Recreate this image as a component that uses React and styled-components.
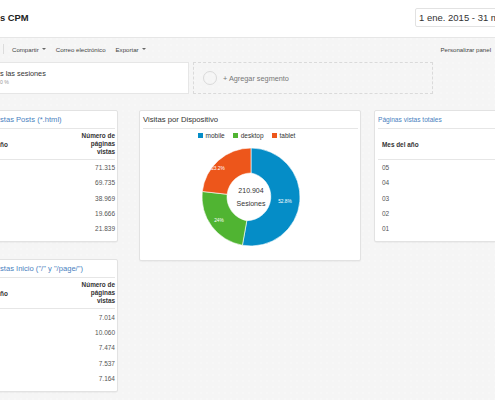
import React from "react";
import styled, { createGlobalStyle } from "styled-components";

const GlobalStyle = createGlobalStyle`
  html, body {
    margin: 0;
    padding: 0;
    background: #f5f5f5;
  }
  body {
    font-family: "Liberation Sans", Arial, sans-serif;
  }
`;

const Page = styled.div`
  width: 495px;
  height: 400px;
  overflow: hidden;
  background-color: #f5f5f5;
  background-image: radial-gradient(rgba(255, 255, 255, 0.8) 0.5px, transparent 0.8px);
  background-size: 6px 6px;
`;

const Header = styled.div`
  height: 38px;
  box-sizing: border-box;
  padding-bottom: 2px;
  background: #fff;
  border-bottom: 1px solid #e6e6e6;
  display: grid;
  grid-template-columns: 415px 1fr;
  align-items: center;
`;

const Title = styled.div`
  font-size: 9.4px;
  font-weight: bold;
  color: #222;
`;

const DateRange = styled.div`
  justify-self: start;
  white-space: nowrap;
  font-size: 9.5px;
  color: #333;
  padding: 3px 3px;
  background: #fff;
  border: 1px solid #e2e2e2;
  border-radius: 2px;
`;

const Toolbar = styled.div`
  height: 24px;
  box-sizing: border-box;
  padding: 0 4px 2px 3px;
  display: flex;
  align-items: center;
  gap: 10px;
  font-size: 6.1px;
  color: #444;
`;

const Sep = styled.span`
  width: 1px;
  height: 10px;
  background: #dcdcdc;
  margin-right: -2px;
`;

const ToolItem = styled.span`
  display: inline-flex;
  align-items: center;
  white-space: nowrap;
  margin-left: ${(p) => p.$ml || "0px"};
`;

const Caret = styled.span`
  margin-left: 3px;
  width: 0;
  height: 0;
  border-left: 2px solid transparent;
  border-right: 2px solid transparent;
  border-top: 2px solid #666;
`;

const Segments = styled.div`
  height: 32px;
  display: flex;
  gap: 4px;
`;

const SegmentBox = styled.div`
  margin-left: -2px;
  width: 191px;
  box-sizing: border-box;
  background: #fff;
  border: 1px solid #e6e6e6;
  padding-left: 1px;
  display: flex;
  flex-direction: column;
  justify-content: center;
  line-height: 9px;
`;

const SegName = styled.div`
  font-size: 7.3px;
  color: #333;
  white-space: nowrap;
`;

const SegPct = styled.div`
  font-size: 5.2px;
  color: #999;
`;

const AddSegment = styled.div`
  width: 240px;
  box-sizing: border-box;
  border: 1px dashed #dadada;
  display: flex;
  align-items: center;
  gap: 6px;
  padding-left: 9px;
  font-size: 7.3px;
  color: #777;
`;

const Ring = styled.span`
  width: 12px;
  height: 12px;
  border-radius: 50%;
  border: 1.5px solid #dadada;
`;

const Cards = styled.div`
  display: flex;
  align-items: flex-start;
  padding-top: 16px;
`;

const Column = styled.div`
  flex: 0 0 ${(p) => p.$w}px;
  margin-left: ${(p) => p.$ml}px;
  display: flex;
  flex-direction: column;
  gap: 17px;
`;

const Card = styled.div`
  background: #fff;
  border: 1px solid #e2e2e2;
  border-radius: 2px;
  box-shadow: 0 1px 1px rgba(0, 0, 0, 0.04);
  padding: 0 2px ${(p) => p.$pb || 5}px ${(p) => p.$pl}px;
`;

const CardTitle = styled.div`
  height: 18px;
  box-sizing: border-box;
  border-bottom: 1px solid #e6e6e6;
  display: flex;
  align-items: center;
  white-space: nowrap;
  font-size: ${(p) => p.$size || 7.6}px;
  color: ${(p) => (p.$dark ? "#333" : "#4a7fc0")};
`;

const HeadRow = styled.div`
  height: 31px;
  box-sizing: border-box;
  border-bottom: 1px solid #e6e6e6;
  display: flex;
  align-items: center;
  justify-content: space-between;
  font-size: 6.4px;
  font-weight: bold;
  color: #333;
`;

const HeadCell = styled.div`
  flex: 0 0 ${(p) => (p.$w ? `${p.$w}px` : "auto")};
  padding-left: ${(p) => p.$pl || 0}px;
  box-sizing: border-box;
  white-space: nowrap;
`;

const MetricHead = styled.div`
  text-align: ${(p) => (p.$left ? "left" : "right")};
  line-height: 8px;
  color: ${(p) => p.$color || "#333"};
  white-space: nowrap;
`;

const Row = styled.div`
  height: 15.3px;
  display: flex;
  align-items: center;
  justify-content: ${(p) => (p.$left ? "flex-start" : "flex-end")};
  padding-left: ${(p) => p.$pl || 0}px;
  font-size: 6.5px;
  color: #555;
`;

const Legend = styled.div`
  height: 10px;
  margin-top: 1px;
  padding-right: 8px;
  display: flex;
  justify-content: center;
  align-items: center;
  gap: 8px;
  font-size: 6.5px;
  color: #333;
`;

const LegendItem = styled.span`
  display: inline-flex;
  align-items: center;
  gap: 3px;
`;

const Swatch = styled.span`
  width: 5px;
  height: 5px;
  background: ${(p) => p.$c};
`;

const ChartWrap = styled.div`
  display: flex;
  justify-content: center;
  margin-top: 7px;
`;

const postsRows = ["71.315", "69.735", "38.969", "19.666", "21.839"];
const homeRows = ["7.014", "10.060", "7.474", "7.537", "7.164"];
const months = ["05", "04", "03", "02", "01"];

const MetricHeader = ({ left, color }) => (
  <MetricHead $left={left} $color={color}>
    Número de
    <br />
    páginas
    <br />
    vistas
  </MetricHead>
);

const LeftTable = ({ title, rows }) => (
  <Card $pl={2}>
    <CardTitle>{title}</CardTitle>
    <HeadRow>
      <HeadCell>ño</HeadCell>
      <MetricHeader />
    </HeadRow>
    {rows.map((v) => (
      <Row key={v}>{v}</Row>
    ))}
  </Card>
);

const Donut = () => (
  <svg width="100" height="100" viewBox="0 0 100 100">
    <g stroke="#fff" strokeWidth="0.6">
      <path
        d="M50 1 A49 49 0 1 1 41.42 98.24 L45.8 73.63 A24 24 0 0 0 50 26 Z"
        fill="#058dc7"
      />
      <path
        d="M41.42 98.24 A49 49 0 0 1 1.31 44.47 L26.15 47.29 A24 24 0 0 0 45.8 73.63 Z"
        fill="#50b432"
      />
      <path
        d="M1.31 44.47 A49 49 0 0 1 50 1 L50 26 A24 24 0 0 0 26.15 47.29 Z"
        fill="#ed561b"
      />
    </g>
    <g fill="#fff" fontSize="4.8" textAnchor="middle" dominantBaseline="middle">
      <text x="84" y="55">52.8%</text>
      <text x="18" y="74">24%</text>
      <text x="17" y="22">23.2%</text>
    </g>
    <g fill="#333" fontSize="7" textAnchor="middle" dominantBaseline="middle">
      <text x="50" y="44">210.904</text>
      <text x="50" y="57">Sesiones</text>
    </g>
  </svg>
);

export default function App() {
  return (
    <>
      <GlobalStyle />
      <Page>
        <Header>
          <Title>s CPM</Title>
          <DateRange>1 ene. 2015 - 31 may. 2015</DateRange>
        </Header>
        <Toolbar>
          <Sep />
          <ToolItem>
            Compartir
            <Caret />
          </ToolItem>
          <ToolItem>Correo electrónico</ToolItem>
          <ToolItem>
            Exportar
            <Caret />
          </ToolItem>
          <ToolItem $ml="auto">Personalizar panel</ToolItem>
        </Toolbar>
        <Segments>
          <SegmentBox>
            <SegName>s las sesiones</SegName>
            <SegPct>0 %</SegPct>
          </SegmentBox>
          <AddSegment>
            <Ring />
            + Agregar segmento
          </AddSegment>
        </Segments>
        <Cards>
          <Column $w={121} $ml={-3}>
            <LeftTable title="stas Posts (*.html)" rows={postsRows} />
            <LeftTable title={'stas Inicio ("/" y "/page/")'} rows={homeRows} />
          </Column>
          <Column $w={222} $ml={21}>
            <Card $pl={3} $pb={13}>
              <CardTitle $dark $size={7.7}>
                Visitas por Dispositivo
              </CardTitle>
              <Legend>
                <LegendItem>
                  <Swatch $c="#058dc7" />
                  mobile
                </LegendItem>
                <LegendItem>
                  <Swatch $c="#50b432" />
                  desktop
                </LegendItem>
                <LegendItem>
                  <Swatch $c="#ed561b" />
                  tablet
                </LegendItem>
              </Legend>
              <ChartWrap>
                <Donut />
              </ChartWrap>
            </Card>
          </Column>
          <Column $w={200} $ml={13}>
            <Card $pl={3}>
              <CardTitle $size={6.6}>Páginas vistas totales</CardTitle>
              <HeadRow>
                <HeadCell $w={115} $pl={4}>
                  Mes del año
                </HeadCell>
                <HeadCell>
                  <MetricHeader left color="#e8733a" />
                </HeadCell>
              </HeadRow>
              {months.map((m) => (
                <Row key={m} $left $pl={4}>
                  {m}
                </Row>
              ))}
            </Card>
          </Column>
        </Cards>
      </Page>
    </>
  );
}
